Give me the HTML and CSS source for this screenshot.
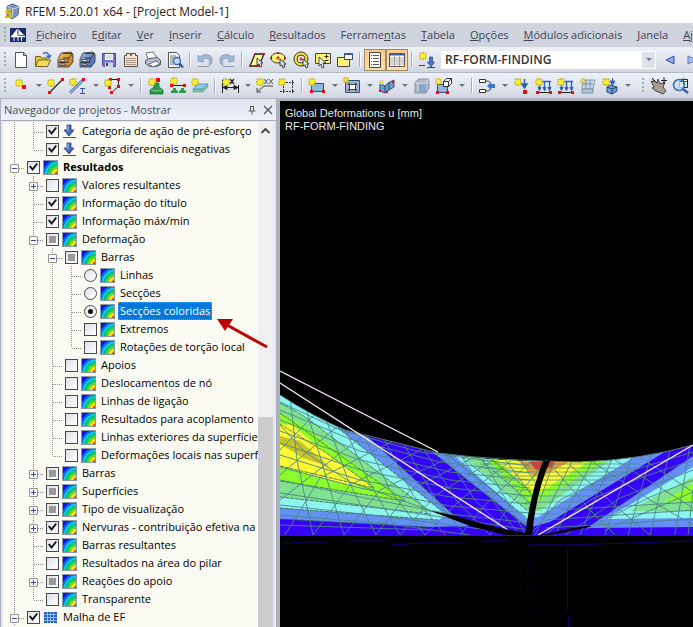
FILE: index.html
```html
<!DOCTYPE html>
<html lang="pt">
<head>
<meta charset="utf-8">
<title>RFEM 5.20.01 x64 - [Project Model-1]</title>
<link rel="stylesheet" href="styles.css">
</head>
<body>
<svg class="defs" width="0" height="0" aria-hidden="true">
  <defs>
    <linearGradient id="blueBox" x1="0" y1="0" x2="1" y2="1"><stop offset="0" stop-color="#9db8e8"/><stop offset="1" stop-color="#3a5fae"/></linearGradient>
    <linearGradient id="orangeBox" x1="0" y1="0" x2="1" y2="1"><stop offset="0" stop-color="#f8c870"/><stop offset="1" stop-color="#b86c18"/></linearGradient>
    <clipPath id="iconClip"><rect x="1" y="1" width="13" height="13"/></clipPath>
  </defs>
  <symbol id="star" viewBox="0 0 8 8"><path d="M4 0v8M0 4h8M1 1l6 6M7 1l-6 6" stroke="#9a8a10" stroke-width="1.6"/><path d="M4 .5v7M.5 4h7M1.5 1.5l5 5M6.500 1.500l-5 5" stroke="#fff12a" stroke-width="1.3"/></symbol>
  <symbol id="result" viewBox="0 0 15 15">
    <rect width="15" height="15" fill="#8d99a8"/>
    <g clip-path="url(#iconClip)"><rect x="1" y="1" width="13" height="13" fill="#1010e8"/>
    <circle cx="16" cy="16" r="17" fill="#0a6cff"/><circle cx="16" cy="16" r="15" fill="#00d8f4"/><circle cx="16" cy="16" r="12.500" fill="#12cf50"/><circle cx="16" cy="16" r="9.500" fill="#9be010"/><circle cx="16" cy="16" r="8" fill="#fff000"/><circle cx="16" cy="16" r="5.500" fill="#ff9000"/><circle cx="16" cy="16" r="4" fill="#e01010"/>
    <g fill="none" stroke="#0a5a70" stroke-width=".4"><circle cx="16" cy="16" r="15"/><circle cx="16" cy="16" r="12.500"/><circle cx="16" cy="16" r="8"/></g></g>
  </symbol>
  <symbol id="load" viewBox="0 0 15 15"><path d="M5 1h4v5h3L7 12 2 6h3z" fill="#4468c0" stroke="#283c78" stroke-width=".8"/><path d="M6 1.500v6" stroke="#b8ccf4"/><path d="M1 13.500h13" stroke="#555"/></symbol>
  <symbol id="mesh" viewBox="0 0 15 15"><rect x="1" y="2" width="13" height="11" fill="#2060c0"/><path d="M1 4.500h13M1 7.500h13M1 10.500h13M4.500 2v11M7.500 2v11M10.500 2v11" stroke="#b8d8ff" stroke-width=".7"/></symbol>
  <symbol id="cabinet" viewBox="0 0 20 20"><path d="M6 3l10-1 2 2v8l-4 5H3V9z" stroke="#333" stroke-width=".8"/><path d="M8 3.500h9M8 8h6l3-4M3.500 12.500h9l1-4.500" fill="none" stroke="#222" stroke-width=".8"/><path d="M5 9.500h5v2H5zM5 14h5v1.500H5z" fill="#fff" stroke="#222" stroke-width=".7"/></symbol>
</svg>

<div class="app">
<header class="titlebar">
  <svg width="17" height="17" viewBox="0 0 17 17" aria-hidden="true"><path d="M4 3l6-2 6 3-1 8-6 4-5-3z" fill="#7d92b8" stroke="#5c6c8c"/><path d="M4 3l6 3 6-2M10 6l-1 9" stroke="#c8d4ec" fill="none"/><path d="M8 7H4L3.500 10H7v4H2" fill="none" stroke="#d8b820" stroke-width="2"/></svg>
  <h1>RFEM 5.20.01 x64 - [Project Model-1]</h1>
</header>

<nav class="menubar" aria-label="Menu">
  <span class="grip"></span>
  <svg class="logo" width="16" height="14" viewBox="0 0 16 14" aria-hidden="true"><rect width="16" height="14" fill="#1c2c6c"/><path d="M1 8.500h14" stroke="#fff" stroke-width="1.500"/><path d="M7 1v7H1.500zM9 2l5 5H9z" fill="#fff"/><path d="M8 1v12M4 8v5M11.500 8v5" stroke="#fff" fill="none"/></svg>
  <a href="#"><u>F</u>icheiro</a>
  <a href="#">E<u>d</u>itar</a>
  <a href="#"><u>V</u>er</a>
  <a href="#"><u>I</u>nserir</a>
  <a href="#"><u>C</u>álculo</a>
  <a href="#"><u>R</u>esultados</a>
  <a href="#">Ferrame<u>n</u>tas</a>
  <a href="#"><u>T</u>abela</a>
  <a href="#"><u>O</u>pções</a>
  <a href="#"><u>M</u>ódulos adicionais</a>
  <a href="#"><u>J</u>anela</a>
  <a href="#"><u>A</u>juda</a>
</nav>

<div class="toolbar" role="toolbar" aria-label="Principal">
  <span class="grip"></span>
  <button aria-label="Novo"><svg viewBox="0 0 20 20"><path d="M4.500 2.500h8l3 3v12h-11z" fill="#fff" stroke="#555"/><path d="M12.500 2.500v3h3" fill="none" stroke="#555"/></svg></button>
  <button aria-label="Abrir"><svg viewBox="0 0 20 20"><path d="M2.500 16V6.500h5l1 1.500H14v8z" fill="#e8c840" stroke="#7a6418"/><path d="M2.500 16.500l3-6.500h12l-3 6.500z" fill="#f4dc60" stroke="#7a6418"/><path d="M10 4c3-3 6-1 6 3M13.500 5.500L16 8l2-3" fill="none" stroke="#3f6cb0" stroke-width="1.500"/></svg></button>
  <button aria-label="Gestor de projetos"><svg viewBox="0 0 20 20" fill="url(#orangeBox)"><use href="#cabinet"/></svg></button>
  <button aria-label="Gestor de blocos"><svg viewBox="0 0 20 20" fill="url(#blueBox)"><use href="#cabinet"/></svg></button>
  <button aria-label="Guardar"><svg viewBox="0 0 20 20"><path d="M3.500 3.500h13v13h-12l-1-1z" fill="#7474cc" stroke="#4a4a90"/><path d="M6 4h8v6H6z" fill="#fff"/><path d="M7 6h6M7 8h6" stroke="#bbb"/><path d="M6 12.500h8V17H6z" fill="#d0d0e0"/><path d="M7 13h2v3H7z" fill="#444"/></svg></button>
  <button aria-label="Relatório"><svg viewBox="0 0 20 20"><path d="M3.500 5.500h2v-2h4v2h1v-2h4v2h2v11h-13z" fill="#f6e4cc" stroke="#5a4c40"/><path d="M5 8.500h10M5 10.500h10M5 12.500h10M5 14.500h10" stroke="#a8988a"/></svg></button>
  <button aria-label="Imprimir"><svg viewBox="0 0 20 20"><path d="M5 9L3 3l7-1 4 6" fill="#fff" stroke="#777"/><path d="M2.500 10.500l3-2 9-1 3 3v4l-4 2h-7l-4-3z" fill="#b4b8d0" stroke="#555"/><path d="M6 14l7-3 4 3-7 3z" fill="#fff" stroke="#667"/></svg></button>
  <button aria-label="Pré-visualizar"><svg viewBox="0 0 20 20"><path d="M3.500 2.500h8l3 3v12h-11z" fill="#f0f4f4" stroke="#555"/><path d="M5 6h6M5 8h8M5 10h8M5 12h8M5 14h8" stroke="#71807c"/><circle cx="12" cy="11" r="3.500" fill="#b8dcf8" stroke="#386ab0" stroke-width="1.300"/><path d="M14.500 13.500l3.500 4" stroke="#2c5494" stroke-width="2"/></svg></button>
  <span class="sep"></span>
  <button aria-label="Anular"><svg viewBox="0 0 20 20"><path d="M3 11V5l2 2c4-4 12-3 12 3s-3 5-3 5c3-7-4-8-7-5l2 2z" fill="#a8b8d4" stroke="#7c8dad" stroke-width=".7"/><path d="M3 16.500h11" stroke="#8fa0bd"/></svg></button>
  <button aria-label="Refazer"><svg viewBox="0 0 20 20"><path d="M17 11V5l-2 2C11 3 3 4 3 10s3 5 3 5C3 8 10 7 13 10l-2 2z" fill="#a8b8d4" stroke="#7c8dad" stroke-width=".7"/><path d="M6 16.500h11" stroke="#8fa0bd"/></svg></button>
  <span class="sep"></span>
  <button aria-label="Seleção por losango"><svg viewBox="0 0 20 20"><path d="M3 16L8 4h9l-5 12z" fill="#fffa90" stroke="#222" stroke-width="1.300"/><path d="M2 15h2v2H2zM7 3h2v2H7zM16 3h2v2h-2zM11 15h2v2h-2z" fill="#e01010"/><path d="M10 8v7l2-1 1 3 2-1-1-3h2z" fill="#ddd" stroke="#222" stroke-width=".8"/></svg></button>
  <button aria-label="Seleção por elipse"><svg viewBox="0 0 20 20"><ellipse cx="9" cy="8" rx="7" ry="5" fill="#fff780" stroke="#333"/><path d="M9 6v4M7 8h4" stroke="#e01010"/><path d="M1 7h2v2H1zM8 2h2v2H8zM15 7h2v2h-2z" fill="#e01010"/><path d="M11 9v7l2-1 1 3 2-1-1-3h2z" fill="#ddd" stroke="#222" stroke-width=".8"/></svg></button>
  <button aria-label="Seleção por anel"><svg viewBox="0 0 20 20"><circle cx="10" cy="9" r="7" fill="#f8e820" stroke="#333"/><circle cx="10" cy="9" r="4" fill="#eef2fa" stroke="#333"/><path d="M10 7v4M8 9h4" stroke="#e01010"/><path d="M12 9v7l2-1 1 3 2-1-1-3h2z" fill="#ddd" stroke="#222" stroke-width=".8"/></svg></button>
  <button aria-label="Seleção por janela"><svg viewBox="0 0 20 20"><path d="M2.500 3.500h15v10h-15z" fill="#fff27a" stroke="#444"/><path d="M13.500 4.500v4M11.500 6.500h4M11.500 10.500h4" stroke="#222"/><path d="M6 7v9l2-2 1 4 2-1-1-4h3z" fill="#eee" stroke="#222" stroke-width=".8"/></svg></button>
  <button aria-label="Nova janela"><svg viewBox="0 0 20 20"><path d="M2.500 7.500h12v9h-12z" fill="#fff27a" stroke="#444"/><path d="M9.500 3.500h8v6h-8z" fill="#f4f6ff" stroke="#444"/><path d="M9 4h9" stroke="#4058a0" stroke-width="2"/></svg></button>
  <span class="sep"></span>
  <button class="active" aria-label="Navegador" aria-pressed="true"><svg viewBox="0 0 20 20"><path d="M4.500 2.500h11v15h-11z" fill="#fff" stroke="#444"/><path d="M6 5.500h1M6 8.500h1M6 11.500h1M6 14.500h1M8 5.500h6M8 8.500h6M8 11.500h6M8 14.500h6" stroke="#555"/></svg></button>
  <button class="active" aria-label="Tabelas" aria-pressed="true"><svg viewBox="0 0 20 20"><path d="M2.500 3.500h15v13h-15z" fill="#fff" stroke="#555"/><path d="M3 4.500h14" stroke="#3b5bb0" stroke-width="2"/><path d="M3 8h14M3 10h14M3 12h14M3 14h14M7.500 6v10M12.500 6v10" stroke="#98948c" stroke-width=".8"/></svg></button>
  <span class="sep"></span>
  <button aria-label="Caso de carga"><svg viewBox="0 0 20 20"><use href="#star" x="2" y="2" width="8" height="8"/><path d="M2 15.500h6M10 17.500h8" stroke="#444"/><path d="M12.500 7h3v5h2L14 17l-3.500-5h2z" fill="#4a74c8" stroke="#2c4484" stroke-width=".7"/></svg></button>
  <label class="combo">
    <select aria-label="Caso de carga"><option>RF-FORM-FINDING</option></select>
    <span class="combo-arrow" aria-hidden="true"></span>
  </label>
  <button aria-label="Anterior"><svg viewBox="0 0 20 20"><path d="M14 6v8l-8-4z" fill="#8cacf0" stroke="#2c50a8"/></svg></button>
  <button aria-label="Seguinte"><svg viewBox="0 0 20 20"><path d="M6 6v8l8-4z" fill="#a8bce8" stroke="#5a78bc"/></svg></button>
</div>

<div class="toolbar" role="toolbar" aria-label="Inserir">
  <span class="grip"></span>
  <button aria-label="Nó"><svg viewBox="0 0 20 20"><use href="#star" x="4" y="3" width="8" height="8"/><path d="M11 9h4v4h-4z" fill="#e01010"/></svg></button>
  <button class="drop" aria-label="Opções de nó"></button>
  <button aria-label="Linha"><svg viewBox="0 0 20 20"><path d="M3 17L16 4" stroke="#222" stroke-width="1.300"/><path d="M2 15h3v3H2zM15 2h3v3h-3z" fill="#e01010"/><use href="#star" x="1" y="3" width="8" height="8"/></svg></button>
  <button aria-label="Barra"><svg viewBox="0 0 20 20"><path d="M2 17L15 4" stroke="#4f7fae" stroke-width="3"/><path d="M2 17L15 4" stroke="#c0dcf4"/><path d="M14 2h3v3h-3z" fill="#e01010"/><path d="M12 12.500h5M12 17.500h5M14.500 12v5" stroke="#3850b0"/><use href="#star" x="1" y="2" width="8" height="8"/></svg></button>
  <button class="drop" aria-label="Opções de barra"></button>
  <button aria-label="Polilinha"><svg viewBox="0 0 20 20"><path d="M7.500 3.500h8v7l-7 6" fill="none" stroke="#222"/><path d="M6 2h3v3H6zM14 2h3v3h-3zM14 9h3v3h-3zM7 15h3v3H7zM5 10h3v3H5z" fill="#e01010"/><use href="#star" x="1" y="3" width="8" height="8"/></svg></button>
  <button class="drop" aria-label="Opções de polilinha"></button>
  <span class="sep"></span>
  <button aria-label="Apoio de nó"><svg viewBox="0 0 20 20"><path d="M8 7h5v4l4 3v4H4v-4l4-3z" fill="#2c9a48" stroke="#186a2c" stroke-width=".7"/><path d="M5 14c2 1 9 1 11 0" stroke="#7cd090" fill="none"/><path d="M10 2h4v4h-4z" fill="#e01010"/><use href="#star" x="2" y="2" width="8" height="8"/></svg></button>
  <button aria-label="Apoio de linha"><svg viewBox="0 0 20 20"><path d="M3 9.500h14" stroke="#222"/><path d="M2 8h3v3H2zM15 8h3v3h-3z" fill="#e01010"/><path d="M5 12h3v2l2 1v2H3v-2l2-1zM13 12h3v2l2 1v2h-7v-2l2-1z" fill="#2c9a48"/><use href="#star" x="2" y="1" width="8" height="8"/></svg></button>
  <button aria-label="Apoio de superfície"><svg viewBox="0 0 20 20"><path d="M3 13v3h10l5-5V8l-5 5z" fill="#7cc8a0" stroke="#58a080" stroke-width=".6"/><path d="M3 13l5-5h10l-5 5z" fill="#8ccaf0" stroke="#5a9ab8"/><use href="#star" x="1" y="2" width="8" height="8"/></svg></button>
  <span class="sep"></span>
  <button aria-label="Cota"><svg viewBox="0 0 20 20"><path d="M2.500 4v13M18.500 9v8M3 11.500h15M3 11.500l4-2v4zM18 11.500l-4-2v4z" stroke="#222" fill="#222"/><path d="M10 3l4 5M14 3l-4 5" stroke="#222" stroke-width="1.300"/><use href="#star" x="2" y="2" width="8" height="8"/></svg></button>
  <button class="drop" aria-label="Opções de cota"></button>
  <button aria-label="Comentário"><svg viewBox="0 0 20 20"><path d="M2 16l7-6h9M2 16v-4M2 16h4" stroke="#444" fill="none"/><path d="M9 3l4 5M13 3L9 8M14 3l4 5M18 3l-4 5" stroke="#444" stroke-width=".9"/><use href="#star" x="1" y="2" width="8" height="8"/></svg></button>
  <button aria-label="Grelha"><svg viewBox="0 0 20 20"><path d="M6.500 4v13M15.500 4v13M3 6.500h15M3 15.500h15" stroke="#333" stroke-dasharray="2 1"/><use href="#star" x="1" y="2" width="8" height="8"/></svg></button>
  <span class="sep"></span>
  <button aria-label="Superfície"><svg viewBox="0 0 20 20"><path d="M4.500 7.500h12v8h-12z" fill="#8eb8dc" stroke="#34506c"/><path d="M3 14h3v3H3zM15 14h3v3h-3z" fill="#e01010"/><use href="#star" x="1" y="2" width="8" height="8"/></svg></button>
  <button class="drop" aria-label="Opções de superfície"></button>
  <button aria-label="Abertura"><svg viewBox="0 0 20 20"><path d="M3.500 4.500h14v12h-14z" fill="#8eb8dc" stroke="#34506c"/><path d="M7.500 8.500h6v5h-6z" fill="#fff" stroke="#345"/><path d="M6 7h2v2H6zM13 7h2v2h-2zM6 13h2v2H6zM13 13h2v2h-2z" fill="#e01010"/><use href="#star" x="1" y="1" width="6" height="6"/></svg></button>
  <button class="drop" aria-label="Opções de abertura"></button>
  <button aria-label="Superfície curva"><svg viewBox="0 0 20 20"><path d="M3 8l5 2 3-3 6-3v7l-5 3-4 3-5-2z" fill="#6aa0cc" stroke="#34506c"/><path d="M8 10v7M12 7v7" stroke="#245080"/><path d="M2 14h2v2H2zM9 15h2v2H9zM15 5h2v2h-2z" fill="#e01010"/><use href="#star" x="2" y="4" width="5" height="5"/></svg></button>
  <button class="drop" aria-label="Opções de superfície curva"></button>
  <button aria-label="Sólido"><svg viewBox="0 0 20 20"><path d="M3 6l4-3h10v9l-3 5H3z" fill="#b0bccb" stroke="#8290a4"/><path d="M3 6l4 2h7l3-5M7 8v8" fill="none" stroke="#dde4ee"/><path d="M7 8h7v8H7z" fill="#8ba6c4"/></svg></button>
  <button aria-label="Novo sólido"><svg viewBox="0 0 20 20"><path d="M3.500 8.500h10v8h-10z" fill="#8eb8dc" stroke="#34506c"/><path d="M9.500 5.500h5v5h-5zM9.500 5.500l3-3h5v5l-3 3M14.500 5.500l3-3" fill="#f4f4f8" stroke="#333"/><path d="M2 15h3v3H2zM12 15h3v3h-3z" fill="#e01010"/><use href="#star" x="1" y="2" width="7" height="7"/></svg></button>
  <button class="drop" aria-label="Opções de sólido"></button>
  <span class="sep"></span>
  <button aria-label="Ligação"><svg viewBox="0 0 20 20"><path d="M2.500 3.500h6v3h-6zM2.500 13.500h6v3h-6z" fill="#fff" stroke="#333"/><path d="M9 5c4 0 5 1 5 5s-1 5-5 5" fill="none" stroke="#333"/><path d="M10 10l4-4v2h4v4h-4v2z" fill="#3878d0"/></svg></button>
  <button class="drop" aria-label="Opções de ligação"></button>
  <button aria-label="Carga nodal"><svg viewBox="0 0 20 20"><path d="M12.500 3v8M10 8l2.500 4L15 8z" stroke="#2c60b8" fill="#2c60b8" stroke-width="1.500"/><path d="M11 14h4v4h-4z" fill="#e01010"/><use href="#star" x="2" y="2" width="8" height="8"/></svg></button>
  <button aria-label="Carga de barra"><svg viewBox="0 0 20 20"><path d="M3 5.500h14M5.500 6v8M10.500 6v8M15.500 6v8M4 11l1.500 3L7 11M9 11l1.500 3 1.500-3M14 11l1.500 3 1.500-3" stroke="#2c60b8" fill="none" stroke-width="1.300"/><path d="M2 16.500h16" stroke="#222"/><path d="M2 15h3v3H2zM15 15h3v3h-3z" fill="#e01010"/><use href="#star" x="1" y="2" width="8" height="8"/></svg></button>
  <button aria-label="Carga de linha"><svg viewBox="0 0 20 20"><path d="M3 5.500h14M5.500 6v8M10.500 6v8M15.500 6v8M4 11l1.500 3L7 11M9 11l1.500 3 1.500-3M14 11l1.500 3 1.500-3" stroke="#2c60b8" fill="none" stroke-width="1.300"/><path d="M2 16.500h16" stroke="#222"/><path d="M2 15h3v3H2zM15 15h3v3h-3z" fill="#e01010"/><use href="#star" x="1" y="2" width="8" height="8"/></svg></button>
  <button aria-label="Carga de superfície"><svg viewBox="0 0 20 20"><path d="M5 4h12l-2 9H4z" fill="#c8d8e4" stroke="#8aa0b8"/><path d="M4 13h11v4H4zM8 4v9M12 4v9M5 8h10" fill="#b4c8d8" stroke="#7890a8"/><use href="#star" x="2" y="2" width="6" height="6" opacity=".6"/></svg></button>
  <button aria-label="Carga de sólido"><svg viewBox="0 0 20 20"><path d="M7 11l4-2 6 2v4l-5 3-5-2z" fill="#6c9cd4" stroke="#2c4c7c"/><path d="M7 11l5 2 5-2M12 13v5" stroke="#24446c" fill="none"/><path d="M12.500 2v6M10 5l2.500 4L15 5z" stroke="#2c60b8" fill="#2c60b8"/><use href="#star" x="2" y="2" width="8" height="8"/></svg></button>
  <button class="drop" aria-label="Opções de carga"></button>
  <span class="sep gap"></span>
  <span class="grip"></span>
  <button aria-label="Mover vista"><svg viewBox="0 0 20 20"><path d="M2 5l3 1-1-3 4 4 1-4 2 5 5-2-2 5 3 4-3 3-7-3-4-3 2-1z" fill="#a89c94" stroke="#4c4440"/><path d="M15 1v7M12 4.500h6M3 2l5 5" stroke="#222"/></svg></button>
  <button aria-label="Zoom"><svg viewBox="0 0 20 20"><path d="M8.500 3.500h8v8h-8z" fill="#fff" stroke="#222"/><circle cx="8" cy="9" r="5.500" fill="#c8e0f8" fill-opacity=".8" stroke="#3c68c0" stroke-width="1.500"/><path d="M12 13l5 4" stroke="#3860b8" stroke-width="2.500"/><path d="M12.500 2v7M9 5.500h7" stroke="#c03030"/></svg></button>
</div>

<main class="workspace">
  <aside class="navigator">
    <header class="nav-head">
      <h2>Navegador de projetos - Mostrar</h2>
      <button aria-label="Fixar"><svg viewBox="0 0 10 10"><path d="M3 1.500h4M3.500 1.500v4M6.500 1v5M1.500 6h7M5 6v3.500" stroke="#555" fill="none"/></svg></button>
      <button aria-label="Fechar"><svg viewBox="0 0 10 10"><path d="M1 1l8 8M9 1l-8 8" stroke="#555" stroke-width="1.300"/></svg></button>
    </header>
    <div class="tree-wrap">
      <ul class="tree">
        <li><i class="v"></i><i class="t"></i><label><input type="checkbox" checked><svg><use href="#load"/></svg><span>Categoria de ação de pré-esforço</span></label></li>
        <li><i class="v"></i><i class="l"></i><label><input type="checkbox" checked><svg><use href="#load"/></svg><span>Cargas diferenciais negativas</span></label></li>
        <li><i class="t"><b class="minus"></b></i><label><input type="checkbox" checked><svg><use href="#result"/></svg><span class="bold">Resultados</span></label></li>
        <li><i class="v"></i><i class="t"><b class="plus"></b></i><label><input type="checkbox"><svg><use href="#result"/></svg><span>Valores resultantes</span></label></li>
        <li><i class="v"></i><i class="t"></i><label><input type="checkbox" checked><svg><use href="#result"/></svg><span>Informação do título</span></label></li>
        <li><i class="v"></i><i class="t"></i><label><input type="checkbox" checked><svg><use href="#result"/></svg><span>Informação máx/mín</span></label></li>
        <li><i class="v"></i><i class="t"><b class="minus"></b></i><label><input type="checkbox" class="mixed"><svg><use href="#result"/></svg><span>Deformação</span></label></li>
        <li><i class="v"></i><i class="v"></i><i class="t"><b class="minus"></b></i><label><input type="checkbox" class="mixed"><svg><use href="#result"/></svg><span>Barras</span></label></li>
        <li><i class="v"></i><i class="v"></i><i class="v"></i><i class="t"></i><label><input type="radio" name="bars"><svg><use href="#result"/></svg><span>Linhas</span></label></li>
        <li><i class="v"></i><i class="v"></i><i class="v"></i><i class="t"></i><label><input type="radio" name="bars"><svg><use href="#result"/></svg><span>Secções</span></label></li>
        <li><i class="v"></i><i class="v"></i><i class="v"></i><i class="t"></i><label><input type="radio" name="bars" checked><svg><use href="#result"/></svg><span class="selected">Secções coloridas</span></label></li>
        <li><i class="v"></i><i class="v"></i><i class="v"></i><i class="t"></i><label><input type="checkbox"><svg><use href="#result"/></svg><span>Extremos</span></label></li>
        <li><i class="v"></i><i class="v"></i><i class="v"></i><i class="l"></i><label><input type="checkbox"><svg><use href="#result"/></svg><span>Rotações de torção local</span></label></li>
        <li><i class="v"></i><i class="v"></i><i class="t"></i><label><input type="checkbox"><svg><use href="#result"/></svg><span>Apoios</span></label></li>
        <li><i class="v"></i><i class="v"></i><i class="t"></i><label><input type="checkbox"><svg><use href="#result"/></svg><span>Deslocamentos de nó</span></label></li>
        <li><i class="v"></i><i class="v"></i><i class="t"></i><label><input type="checkbox"><svg><use href="#result"/></svg><span>Linhas de ligação</span></label></li>
        <li><i class="v"></i><i class="v"></i><i class="t"></i><label><input type="checkbox"><svg><use href="#result"/></svg><span>Resultados para acoplamento</span></label></li>
        <li><i class="v"></i><i class="v"></i><i class="t"></i><label><input type="checkbox"><svg><use href="#result"/></svg><span>Linhas exteriores da superfície</span></label></li>
        <li><i class="v"></i><i class="v"></i><i class="l"></i><label><input type="checkbox"><svg><use href="#result"/></svg><span>Deformações locais nas superfícies</span></label></li>
        <li><i class="v"></i><i class="t"><b class="plus"></b></i><label><input type="checkbox" class="mixed"><svg><use href="#result"/></svg><span>Barras</span></label></li>
        <li><i class="v"></i><i class="t"><b class="plus"></b></i><label><input type="checkbox" class="mixed"><svg><use href="#result"/></svg><span>Superfícies</span></label></li>
        <li><i class="v"></i><i class="t"><b class="plus"></b></i><label><input type="checkbox" class="mixed"><svg><use href="#result"/></svg><span>Tipo de visualização</span></label></li>
        <li><i class="v"></i><i class="t"><b class="plus"></b></i><label><input type="checkbox" checked><svg><use href="#result"/></svg><span>Nervuras - contribuição efetiva na</span></label></li>
        <li><i class="v"></i><i class="t"></i><label><input type="checkbox" checked><svg><use href="#result"/></svg><span>Barras resultantes</span></label></li>
        <li><i class="v"></i><i class="t"></i><label><input type="checkbox"><svg><use href="#result"/></svg><span>Resultados na área do pilar</span></label></li>
        <li><i class="v"></i><i class="t"><b class="plus"></b></i><label><input type="checkbox" class="mixed"><svg><use href="#result"/></svg><span>Reações do apoio</span></label></li>
        <li><i class="v"></i><i class="l"></i><label><input type="checkbox"><svg><use href="#result"/></svg><span>Transparente</span></label></li>
        <li><i class="t"><b class="minus"></b></i><label><input type="checkbox" checked><svg><use href="#mesh"/></svg><span>Malha de EF</span></label></li>
      </ul>
      <div class="scrollbar" aria-hidden="true">
        <svg viewBox="0 0 14 18"><path d="M3 11l4-4 4 4" fill="none" stroke="#444" stroke-width="1.800"/></svg>
        <span class="thumb"></span>
      </div>
      <svg class="arrow" width="56" height="34" viewBox="0 0 56 34" aria-hidden="true"><path d="M12 8l40 22" stroke="#c00000" stroke-width="3"/><path d="M2 2h16l-8 12z" fill="#c00000"/></svg>
    </div>
  </aside>

  <section class="view">
    <p class="caption">Global Deformations u [mm]<br>RF-FORM-FINDING</p>
    <svg class="model" viewBox="280 101 413 526" preserveAspectRatio="xMinYMin slice" role="img" aria-label="Modelo deformado">
      <defs>
        <clipPath id="skin"><path d="M280 395Q312 416 345 430L362 435 400 444 438 453Q470 458 500 460T580 462Q640 460 693 445V535H280z"/></clipPath>
      </defs>
      <g clip-path="url(#skin)">
        <rect x="280" y="390" width="413" height="146" fill="#3503f8"/>
        <path d="M280 390L345 425 368 437 458 519 470 526 428 527 280 519z" fill="#6490f6"/>
        <path d="M280 390L338 428 448 516 438 520 280 508z" fill="#8df4f0"/>
        <path d="M280 403Q305 415 325 432L431 512 420 512 280 497z" fill="#80e290"/>
        <path d="M280 413L300 423 405 501 280 481z" fill="#8cfc2c"/>
        <path d="M280 424L292 425 325 452 374 488 340 483 280 466z" fill="#fdf934"/>
        <path d="M280 436L300 441 330 467 303 458 280 444z" fill="#cbc32c"/>
        <path d="M430 450L528 528 550 522 668 450z" fill="#6490f6"/>
        <path d="M448 450L527 519 538 517 645 450z" fill="#8df4f0"/>
        <path d="M456 450L528 511 540 511 625 450z" fill="#80e290"/>
        <path d="M478 450L530 503 540 500 612 456z" fill="#8cfc2c"/>
        <path d="M488 452L531 492 542 491 596 457z" fill="#fdf934"/>
        <path d="M510 452L533 476 545 475 576 458z" fill="#e2a038"/>
        <path d="M528 460L536 470 552 467 556 460z" fill="#d83a34"/>
        <path d="M587 528L693 456V527z" fill="#6490f6"/>
        <path d="M606 519L693 467V518z" fill="#8df4f0"/>
        <path d="M630 511L652 498 693 477V512z" fill="#80e290"/>
        <path d="M664 502L693 483V501z" fill="#8cfc2c"/>
        <g fill="none" stroke="#2d6540" stroke-width=".8" stroke-dasharray="4 1">
          <path d="M280 403Q305 415 325 432L431 512M280 497L431 514M280 413L405 501 280 481M280 424L325 452 374 488M280 466L374 488M338 428L448 516M280 508L438 520M368 437L458 519M280 519L428 527"/>
          <path d="M433 453L528 527M449 456L527 518M462 457L528 511M478 457L530 503M490 458L531 492"/>
        </g>
        <g fill="none" stroke="#4d8584" stroke-width=".9">
          <path d="M280 402L340 430 420 452 530 466M280 410L350 439 440 462 530 473M280 420L360 451 450 472 530 480M280 431L360 460 450 480 530 488M280 443L360 470 450 488 530 496M280 455L360 480 450 497 530 504M280 467L360 488 450 506 530 513M280 480L360 497 450 514 530 523M280 493L380 508 530 530M280 505L380 516 520 534M280 515L380 523 470 535M280 525L430 530"/>
          <path d="M290 395L297 460 313 535M305 405L324 470 344 535M325 416L348 480 376 535M343 424L368 480 400 535M362 432L390 490 425 535M382 435L413 495 445 535M402 441L436 500 465 535M422 446L456 500 490 535M442 450L475 500 510 535M460 455L496 505 520 535M480 455L512 510 526 535"/>
          <path d="M280 450L315 414M280 475L340 424M280 500L365 434M285 535L320 478 395 440M313 535L350 485 425 448M344 535L380 490 455 455M376 535L410 490 475 457M400 535L436 495 495 459M425 535L460 500 512 460M460 535L485 505 530 462M490 535L510 505 543 465M280 425L305 452 350 482 440 514"/>
          <path d="M480 464H640M484 468H640M490 472H630M498 476H628M504 480H620M510 485H610M516 490H600M520 496H592M525 502H582M528 508H572M530 514H560" stroke-width=".7"/>
          <path d="M505 459L535 500M520 459L540 490M555 459L540 500M573 459L535 535M593 459L555 535M612 459L580 535M632 457L605 535M651 455L628 535M670 450L650 535M690 445L675 535M693 490L688 535"/>
          <path d="M530 535L560 500 600 480 693 452M545 535L590 500 640 478 693 460M565 535L620 498 693 470M585 530L650 497 693 480M605 530L693 492M560 510L693 502M545 520L693 510M545 528L693 519M640 457L693 492M615 460L693 508M590 460L650 500 693 525M570 465L620 510 650 535M555 470L590 510 615 535"/>
        </g>
      </g>
      <path d="M280 395Q312 416 345 430L438 453Q500 461 580 462 640 460 693 445" fill="none" stroke="#557f7c"/>
      <g fill="none" stroke="#f4e8f4" stroke-width="1.400"><path d="M280 371L438 452M280 383L508 530M538 535L693 445"/></g>
      <path d="M431 511Q455 515 470 520T530 534V539L505 535 470 526z" fill="#000"/>
      <path d="M543 461Q530 494 525 536H532Q536 492 550 461z" fill="#000"/>
      <path d="M538 536Q565 533 590 526L570 529 548 534z" fill="#000" stroke="#000"/>
      <path d="M280 535.500h413" stroke="#34565a" stroke-width=".6"/>
      <g fill="none" stroke="#120078"><path d="M283 544l20-2h23M350 540h35M392 545l30-2h40M483 541l25-1M528 545h35l69-2 61-2M567.500 550v60M568.500 617v10"/><path d="M528 551v65" stroke-dasharray="3 8"/></g>
    </svg>
  </section>
</main>
</div>
</body>
</html>
```

FILE: styles.css
```css
* { box-sizing: border-box; }

body {
  margin: 0;
  font: 11px/18px "Open Sans", "Noto Sans", sans-serif;
  color: #000;
  background: #fff;
}

button { border: 0; padding: 0; background: none; }
h1, h2, p, ul { margin: 0; padding: 0; font-weight: 400; }
.defs { position: absolute; }

.app {
  display: flex;
  flex-direction: column;
  height: 100vh;
  overflow: hidden;
}

.titlebar {
  display: flex;
  flex: none;
  align-items: center;
  gap: 5px;
  height: 23px;
  padding-left: 3px;
}
.titlebar h1 { font-size: 12px; white-space: nowrap; color: #222; }

.menubar {
  display: flex;
  flex: none;
  align-items: center;
  gap: 15px;
  height: 24px;
  padding-left: 4px;
  overflow: hidden;
  background: #d0d4de;
}
.menubar .logo { flex: none; margin: 0 -5px 0 -11px; }
.menubar a { color: #3c4656; text-decoration: none; white-space: nowrap; }

.grip {
  flex: none;
  width: 2px;
  height: 16px;
  background: repeating-linear-gradient(#a4a9b6 0 2px, transparent 2px 4px);
}

.toolbar {
  display: flex;
  flex: none;
  align-items: center;
  height: 26px;
  padding-left: 4px;
  overflow: hidden;
  background: linear-gradient(#eef1f8, #dce0ea 70%, #d2d6e1);
  border-bottom: 1px solid #b4b8c4;
}
.toolbar .grip { margin-right: 4px; }
.toolbar button { flex: none; width: 22px; height: 22px; }
.toolbar button svg { display: block; width: 20px; height: 20px; margin: 0 auto; }
.toolbar .active { border: 1px solid #a08a68; background: linear-gradient(#fbc98a, #ffe0a8); }
.toolbar .sep {
  flex: none;
  width: 2px;
  height: 15px;
  margin: 0 3px;
  background: linear-gradient(90deg, #a8adb9 50%, #fff 50%);
}
.toolbar .gap { background: none; }
.toolbar .drop { display: flex; align-items: center; justify-content: center; width: 13px; }
.toolbar .drop::before, .combo-arrow::before {
  content: "";
  border: 3px solid transparent;
  border-top-color: #70747e;
  border-bottom: 0;
}

.combo { position: relative; flex: none; width: 215px; height: 18px; margin: 0 3px; }
.combo select {
  appearance: none;
  width: 100%;
  height: 18px;
  padding: 0 4px;
  border: 0;
  background: #fff;
  color: #333;
  font: 600 12px/18px "Open Sans", sans-serif;
}
.combo-arrow {
  position: absolute;
  top: 1px;
  right: 1px;
  display: flex;
  align-items: center;
  justify-content: center;
  width: 13px;
  height: 16px;
  background: #dde1ea;
  pointer-events: none;
}

.workspace { display: flex; flex: 1; min-height: 0; background: #aeb2be; }

.navigator {
  display: flex;
  flex: 0 0 278px;
  flex-direction: column;
  min-width: 0;
  border: solid #aab0be;
  border-width: 0 2px 0 1px;
  background: #e4e8f2;
}
.nav-head {
  display: flex;
  flex: none;
  align-items: center;
  gap: 6px;
  height: 22px;
  padding: 0 3px;
  background: linear-gradient(#dfe4ef, #eef1f9);
  border-bottom: 1px solid #a4acba;
}
.nav-head h2 { flex: 1; font-size: 11px; color: #444c5c; }
.nav-head button { width: 10px; height: 10px; }
.nav-head svg { display: block; }

.tree-wrap {
  position: relative;
  display: flex;
  flex: 1;
  min-height: 0;
  margin: 1px 3px 0 2px;
  background: #fbfbf3;
}
.tree { flex: 1; min-width: 0; padding-left: 2px; list-style: none; overflow: hidden; }
.tree li { display: flex; height: 18px; }
.tree i {
  position: relative;
  flex: none;
  width: 19px;
  background: repeating-linear-gradient(#8c8c88 0 1px, transparent 1px 2px) 9px 0 / 1px 100% no-repeat;
}
.tree i.l { background-size: 1px 50%; }
.tree i.t::before, .tree i.l::before {
  content: "";
  position: absolute;
  top: 10px;
  left: 10px;
  width: 10px;
  height: 1px;
  background: repeating-linear-gradient(90deg, #8c8c88 0 1px, transparent 1px 2px);
}
.tree b {
  position: absolute;
  top: 6px;
  left: 5px;
  width: 9px;
  height: 9px;
  border: 1px solid #919191;
  border-radius: 1px;
  background: linear-gradient(#3550a0, #3550a0) center / 5px 1px no-repeat, #fafafa;
}
.tree b.plus {
  background: linear-gradient(#3550a0, #3550a0) center / 5px 1px no-repeat, linear-gradient(#3550a0, #3550a0) center / 1px 5px no-repeat, #fafafa;
}
.tree label { display: flex; align-items: center; padding-left: 3px; white-space: nowrap; }
.tree label svg { flex: none; width: 15px; height: 15px; margin: 0 3px; }
.tree label span { padding: 0 2px; }
.tree .bold { font-weight: 700; }
.tree .selected { background: #0078d7; color: #fff; outline: 1px dotted #e08020; outline-offset: -1px; }

.tree input {
  appearance: none;
  display: grid;
  place-items: center;
  flex: none;
  width: 13px;
  height: 13px;
  margin: 0;
  border: 1px solid #484848;
  background: linear-gradient(135deg, #dde0e8, #fff);
}
.tree input[type="radio"] { border-radius: 50%; }
.tree input[type="radio"]:checked::before { content: ""; width: 5px; height: 5px; border-radius: 50%; background: #111; }
.tree input[type="checkbox"]:checked::before {
  content: "";
  width: 9px;
  height: 8px;
  background: #111;
  clip-path: polygon(0 45%, 18% 30%, 38% 62%, 85% 0, 100% 12%, 40% 100%);
}
.tree .mixed::before { content: ""; width: 7px; height: 7px; background: #999; }

.scrollbar { display: flex; flex: 0 0 15px; flex-direction: column; background: #f0f0f0; }
.scrollbar svg { flex: none; width: 15px; height: 18px; }
.scrollbar .thumb { flex: 1; margin-top: 277px; background: #cdcdcd; }

.arrow { position: absolute; top: 195px; left: 212px; }

.view { position: relative; flex: 1; min-width: 0; margin: 2px 0 0 2px; background: #000; overflow: hidden; }
.caption {
  position: absolute;
  top: 6px;
  left: 5px;
  font: 11px/13px "Liberation Sans", sans-serif;
  color: #e8e8e8;
}
.model { display: block; width: 100%; height: 100%; }
```
